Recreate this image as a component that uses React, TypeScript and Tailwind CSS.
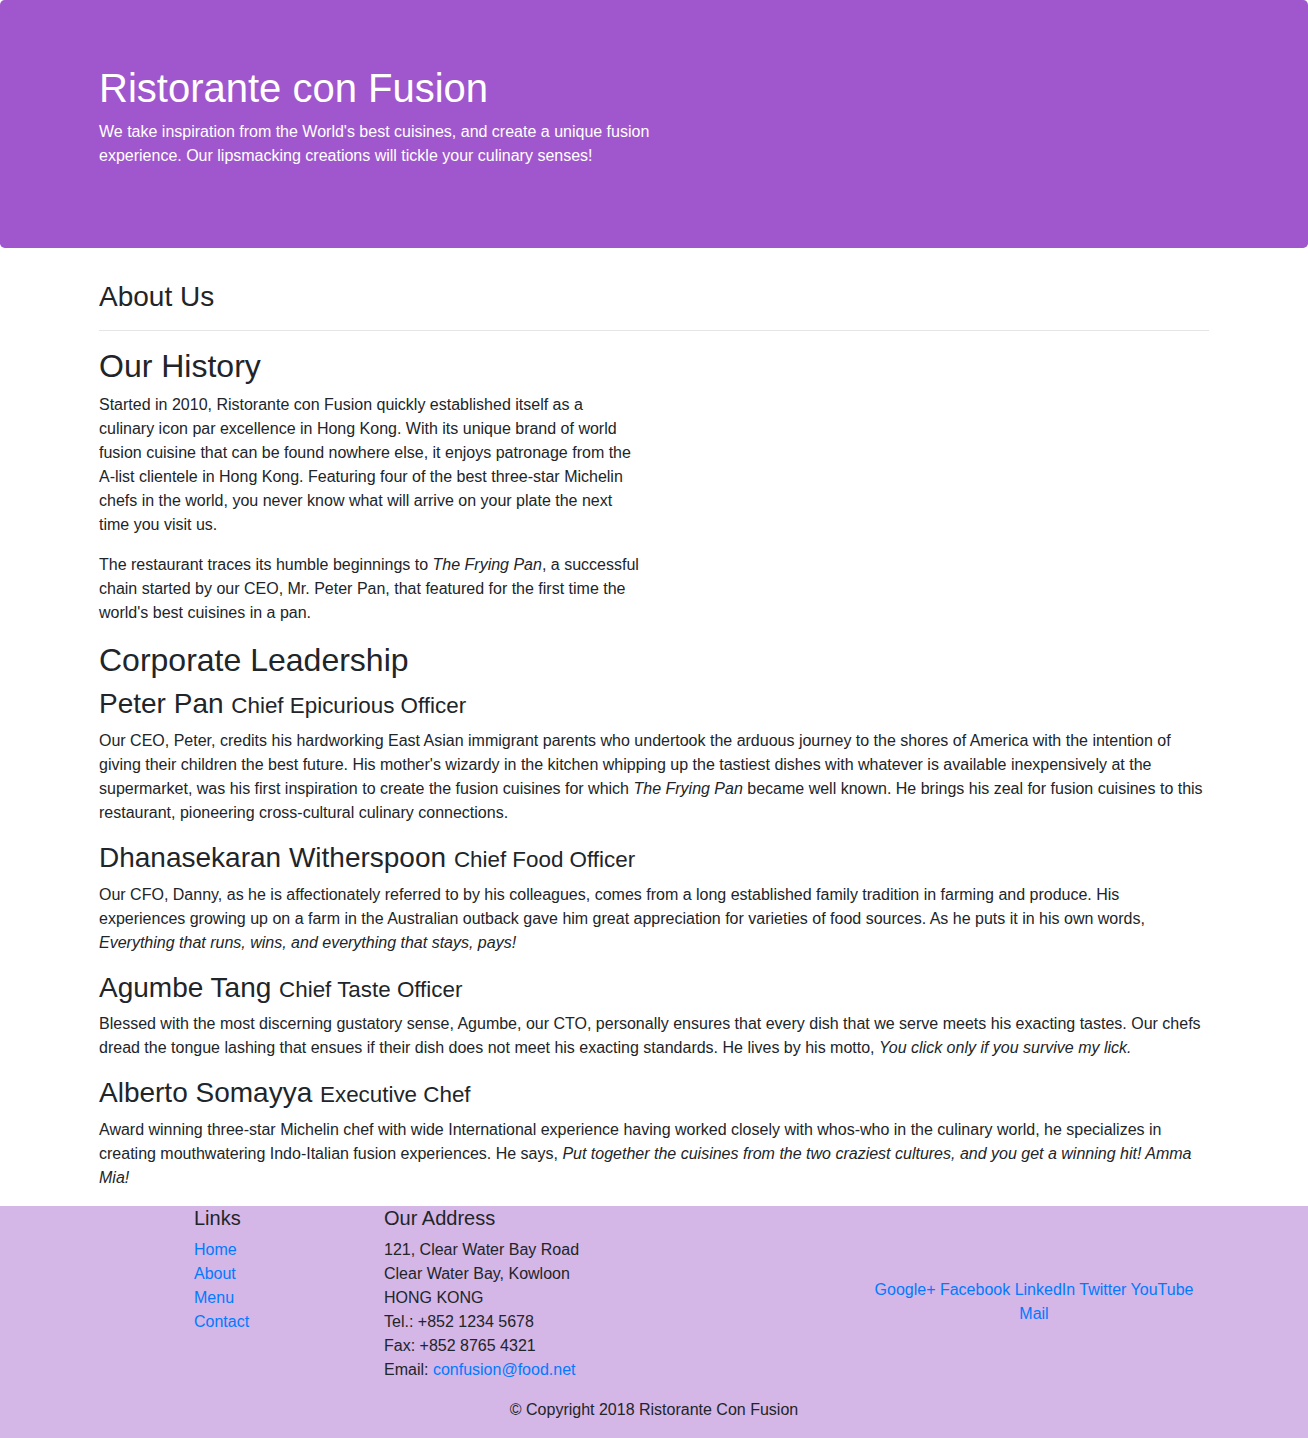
import React from "react";

const F = { fontFamily: '"Liberation Sans", Arial, sans-serif' };

function Leader({ name, title, children }: { name: string; title: string; children: React.ReactNode }) {
  return (
    <div>
      <h3 className="text-[28px] leading-[1.2] font-normal mb-2">
        {name} <small className="text-[80%]">{title}</small>
      </h3>
      <p className="mb-4">{children}</p>
    </div>
  );
}

export default function App() {
  return (
    <div style={F} className="text-[#212529] text-base leading-[1.5] bg-white">
      <header className="bg-[#a057cd] rounded-[0.3rem] py-16 px-8 mb-8 text-white">
        <div className="w-[1140px] mx-auto px-[15px]">
          <div className="w-[570px]">
            <h1 className="text-[40px] leading-[1.2] font-normal mb-2">Ristorante con Fusion</h1>
            <p className="mb-4">
              We take inspiration from the World's best cuisines, and create a unique fusion experience. Our
              lipsmacking creations will tickle your culinary senses!
            </p>
          </div>
        </div>
      </header>

      <main className="w-[1140px] mx-auto px-[15px]">
        <div>
          <h3 className="text-[28px] leading-[1.2] font-normal mb-2">About Us</h3>
          <hr className="mt-4 mb-4 border-0 border-t border-[rgba(0,0,0,0.1)]" />
        </div>
        <div className="w-[540px]">
          <h2 className="text-[32px] leading-[1.2] font-normal mb-2">Our History</h2>
          <p className="mb-4">
            Started in 2010, Ristorante con Fusion quickly established itself as a culinary icon par excellence in
            Hong Kong. With its unique brand of world fusion cuisine that can be found nowhere else, it enjoys
            patronage from the A-list clientele in Hong Kong. Featuring four of the best three-star Michelin chefs in
            the world, you never know what will arrive on your plate the next time you visit us.
          </p>
          <p className="mb-4">
            The restaurant traces its humble beginnings to <em>The Frying Pan</em>, a successful chain started by our
            CEO, Mr. Peter Pan, that featured for the first time the world's best cuisines in a pan.
          </p>
        </div>
        <h2 className="text-[32px] leading-[1.2] font-normal mb-2">Corporate Leadership</h2>
        <Leader name="Peter Pan" title="Chief Epicurious Officer">
          Our CEO, Peter, credits his hardworking East Asian immigrant parents who undertook the arduous journey to
          the shores of America with the intention of giving their children the best future. His mother's wizardy in
          the kitchen whipping up the tastiest dishes with whatever is available inexpensively at the supermarket, was
          his first inspiration to create the fusion cuisines for which <em>The Frying Pan</em> became well known. He
          brings his zeal for fusion cuisines to this restaurant, pioneering cross-cultural culinary connections.
        </Leader>
        <Leader name="Dhanasekaran Witherspoon" title="Chief Food Officer">
          Our CFO, Danny, as he is affectionately referred to by his colleagues, comes from a long established family
          tradition in farming and produce. His experiences growing up on a farm in the Australian outback gave him
          great appreciation for varieties of food sources. As he puts it in his own words,{" "}
          <em>Everything that runs, wins, and everything that stays, pays!</em>
        </Leader>
        <Leader name="Agumbe Tang" title="Chief Taste Officer">
          Blessed with the most discerning gustatory sense, Agumbe, our CTO, personally ensures that every dish that we
          serve meets his exacting tastes. Our chefs dread the tongue lashing that ensues if their dish does not meet
          his exacting standards. He lives by his motto, <em>You click only if you survive my lick.</em>
        </Leader>
        <Leader name="Alberto Somayya" title="Executive Chef">
          Award winning three-star Michelin chef with wide International experience having worked closely with
          whos-who in the culinary world, he specializes in creating mouthwatering Indo-Italian fusion experiences. He
          says,{" "}
          <em>Put together the cuisines from the two craziest cultures, and you get a winning hit! Amma Mia!</em>
        </Leader>
      </main>

      <footer className="bg-[#d4b6e7]">
        <div className="w-[1140px] mx-auto">
          <div className="flex">
            <div className="w-[190px] ml-[95px] px-[15px]">
              <h5 className="text-[20px] leading-[1.2] font-normal mb-2">Links</h5>
              <ul>
                {["Home", "About", "Menu", "Contact"].map((l) => (
                  <li key={l}>
                    <a href="#" className="text-[#007bff]">
                      {l}
                    </a>
                  </li>
                ))}
              </ul>
            </div>
            <div className="w-[475px] px-[15px]">
              <h5 className="text-[20px] leading-[1.2] font-normal mb-2">Our Address</h5>
              <address className="not-italic mb-4">
                121, Clear Water Bay Road
                <br />
                Clear Water Bay, Kowloon
                <br />
                HONG KONG
                <br />
                Tel.: +852 1234 5678
                <br />
                Fax: +852 8765 4321
                <br />
                Email:{" "}
                <a href="#" className="text-[#007bff]">
                  confusion@food.net
                </a>
              </address>
            </div>
            <div className="w-[380px] px-[15px] self-center text-center text-[#007bff]">
              <a href="#">Google+</a> <a href="#">Facebook</a> <a href="#">LinkedIn</a> <a href="#">Twitter</a>{" "}
              <a href="#">YouTube</a> <a href="#">Mail</a>
            </div>
          </div>
          <div className="flex justify-center">
            <p className="mb-4">© Copyright 2018 Ristorante Con Fusion</p>
          </div>
        </div>
      </footer>
    </div>
  );
}
